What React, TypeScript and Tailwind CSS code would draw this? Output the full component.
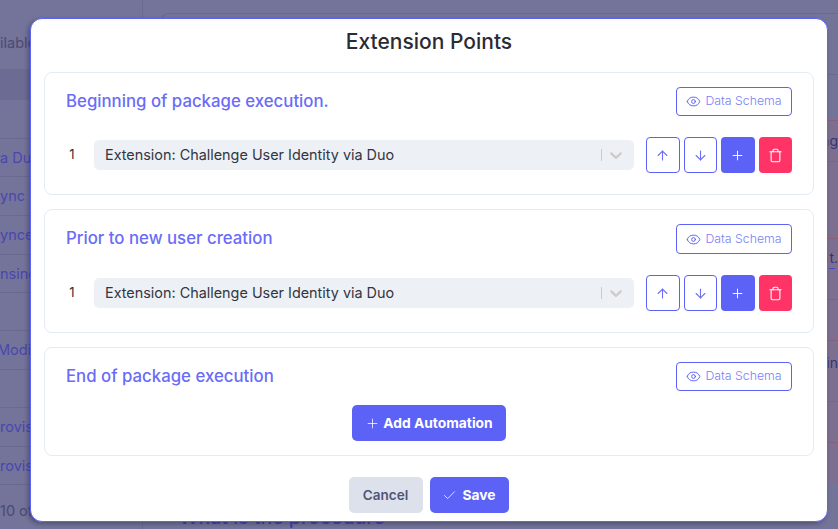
import React from 'react';
import { ArrowDown, ArrowUp, Check, Eye, Plus, Trash } from 'lucide-react';

const leftRows = [
  { text: 'a Duo', cls: 'h-[38px]' },
  { text: 'ync', cls: 'h-[39px]' },
  { text: 'ynced', cls: 'h-[39px]' },
  { text: 'nsing', cls: 'h-[38px]' },
  { text: '', cls: 'h-[38px]' },
  { text: 'Modifi', cls: 'h-[39px] indent-[-3px]' },
  { text: '', cls: 'h-[38px]' },
  { text: 'rovis', cls: 'h-[39px]' },
  { text: 'rovis', cls: 'h-[38px]' },
];

const rightRows = [
  { text: 'ag', cls: 'h-[41px] pt-[11px]' },
  { text: '', cls: 'h-[77px]' },
  { text: 't.', cls: 'h-[61px] pt-[10px]', dash: true },
  { text: '', cls: 'h-[41px]' },
  { text: 'in', cls: 'h-[61px] pt-[13px]' },
  { text: '', cls: 'h-[41px]' },
  { text: '', cls: 'h-[42px]' },
];

const SchemaButton = ({ tall }: { tall?: boolean }) => (
  <button className={`${tall ? 'h-[30px]' : 'h-[29px]'} w-[116px] shrink-0 flex items-center justify-center gap-[4px] rounded-[4px] border border-[#5c62f6] text-[12.3px] font-light text-[#7b7ff8]`}>
    <Eye size={15} strokeWidth={1.6} className="text-[#5c62f6]" />
    Data Schema
  </button>
);

const ExtensionRow = () => (
  <div className="mt-[21px] flex items-center">
    <span className="w-[12px] text-center text-[13px] text-[#2b2d36]">1</span>
    <div className="ml-[16px] h-[30px] flex-1 flex items-center justify-between rounded-[5px] bg-[#edf1f5] pl-[11px] pr-[4px]">
      <span className="text-[14.4px] text-[#33353f]">Extension: Challenge User Identity via Duo</span>
      <div className="flex items-center">
        <span className="h-[12px] w-px bg-[#cccccc]" />
        <svg viewBox="0 0 20 20" className="mx-[4px] h-[20px] w-[20px] fill-[#cccccc]">
          <path d="M4.516 7.548c0.436-0.446 1.043-0.481 1.576 0l3.908 3.747 3.908-3.747c0.533-0.481 1.141-0.446 1.574 0 0.436 0.445 0.408 1.197 0 1.615-0.406 0.418-4.695 4.502-4.695 4.502-0.217 0.223-0.502 0.335-0.787 0.335s-0.57-0.112-0.789-0.335c0 0-4.287-4.084-4.695-4.502s-0.436-1.17 0-1.615z" />
        </svg>
      </div>
    </div>
    <div className="ml-[12px] flex gap-[4px]">
      <button className="h-[36px] w-[33.5px] flex items-center justify-center rounded-[4px] border border-[#5c62f6] text-[#6a6ef8]">
        <ArrowUp size={15} strokeWidth={1.75} />
      </button>
      <button className="h-[36px] w-[33.5px] flex items-center justify-center rounded-[4px] border border-[#5c62f6] text-[#6a6ef8]">
        <ArrowDown size={15} strokeWidth={1.75} />
      </button>
      <button className="h-[36px] w-[33.5px] flex items-center justify-center rounded-[4px] bg-[#5c62f6] text-white">
        <Plus size={15} strokeWidth={1.5} />
      </button>
      <button className="h-[36px] w-[33.5px] flex items-center justify-center rounded-[4px] bg-[#ff3366] text-white">
        <Trash size={15} strokeWidth={1.75} />
      </button>
    </div>
  </div>
);

const Panel = ({ title, tall, children }: { title: string; tall?: boolean; children: React.ReactNode }) => (
  <div className="h-full rounded-[8px] border border-[#e4ebf5] px-[21px] pt-[14px]">
    <div className="flex items-center justify-between">
      <h3 className="text-[16.8px] font-medium text-[#6a6cf8]">{title}</h3>
      <SchemaButton tall={tall} />
    </div>
    {children}
  </div>
);

export default function App() {
  return (
    <div className="relative h-[529px] w-[838px] overflow-hidden bg-[#74739a] font-['Inter',sans-serif]">
      {/* dimmed page behind the dialog */}
      <div className="flex h-full">
        <div className="w-[143px] shrink-0 border-r border-[#6a6990]">
          <div className="h-[69px] pt-[34px] text-[14.5px] leading-[18px] text-[#4b4a72]">ilable</div>
          <div className="h-[31px] bg-[#6c6b93]" />
          <div className="h-[39px] border-b border-[#6a6990]" />
          {leftRows.map((row, i) => (
            <div key={i} className={`${row.cls} flex items-center border-b border-[#6a6990] text-[14.5px] text-[#4a46b0]`}>
              <span>{row.text}</span>
            </div>
          ))}
          <div className="pt-[17px] text-[14.5px] leading-[18px] text-[#4b4a72]">10 of</div>
        </div>
        <div className="flex-1 flex flex-col">
          <div className="ml-[18px] mt-[13px] h-[64px] rounded-tl-[8px] border-t border-l border-b border-[#6a6990]" />
          <div className="h-[46px]" />
          <div className="bg-[#7d6f90]">
            {rightRows.map((row, i) => (
              <div key={i} className={`${row.cls} flex flex-col items-end border-t border-[#8a5f78] text-[14px] leading-[18px] text-[#37346f]`}>
                <span>{row.text}</span>
                {row.dash && <div className="mr-[3px] mt-px h-px w-[6px] bg-[#4a46d0]" />}
              </div>
            ))}
          </div>
          <div className="ml-[36px] mt-[21px] text-[19.5px] font-medium leading-[24px] text-[#3f3ca8]">What is the procedure</div>
        </div>
      </div>

      {/* dialog */}
      <div className="absolute left-[30px] top-[18px] flex h-[504px] w-[798px] flex-col rounded-[12px] border border-[#5c62f6] bg-white px-[13px] shadow-[-2px_2px_4px_rgba(40,40,70,0.45)]">
        <h2 className="h-[53px] pt-[8px] text-center text-[21px] font-medium leading-[30px] text-[#2b2b33]">Extension Points</h2>
        <div className="flex flex-col gap-[14px]">
          <div className="h-[123px]">
            <Panel title="Beginning of package execution.">
              <ExtensionRow />
            </Panel>
          </div>
          <div className="h-[124px]">
            <Panel title="Prior to new user creation" tall>
              <ExtensionRow />
            </Panel>
          </div>
          <div className="h-[109px]">
            <Panel title="End of package execution">
              <div className="mt-[14px] flex justify-center">
                <button className="h-[36px] w-[154px] flex items-center justify-center gap-[3px] rounded-[5px] bg-[#5c62f6] text-[13.8px] font-bold text-white">
                  <Plus size={15} strokeWidth={1.25} />
                  Add Automation
                </button>
              </div>
            </Panel>
          </div>
        </div>
        <div className="mt-[21px] flex justify-center gap-[7px] pr-[1px]">
          <button className="h-[36px] w-[74px] rounded-[5px] bg-[#dce1ec] text-[13.5px] font-semibold text-[#4f5578]">Cancel</button>
          <button className="h-[36px] w-[79px] flex items-center justify-center gap-[5px] rounded-[5px] bg-[#5c62f6] text-[13.8px] font-bold text-white">
            <Check size={15} strokeWidth={1.25} />
            Save
          </button>
        </div>
      </div>
    </div>
  );
}
